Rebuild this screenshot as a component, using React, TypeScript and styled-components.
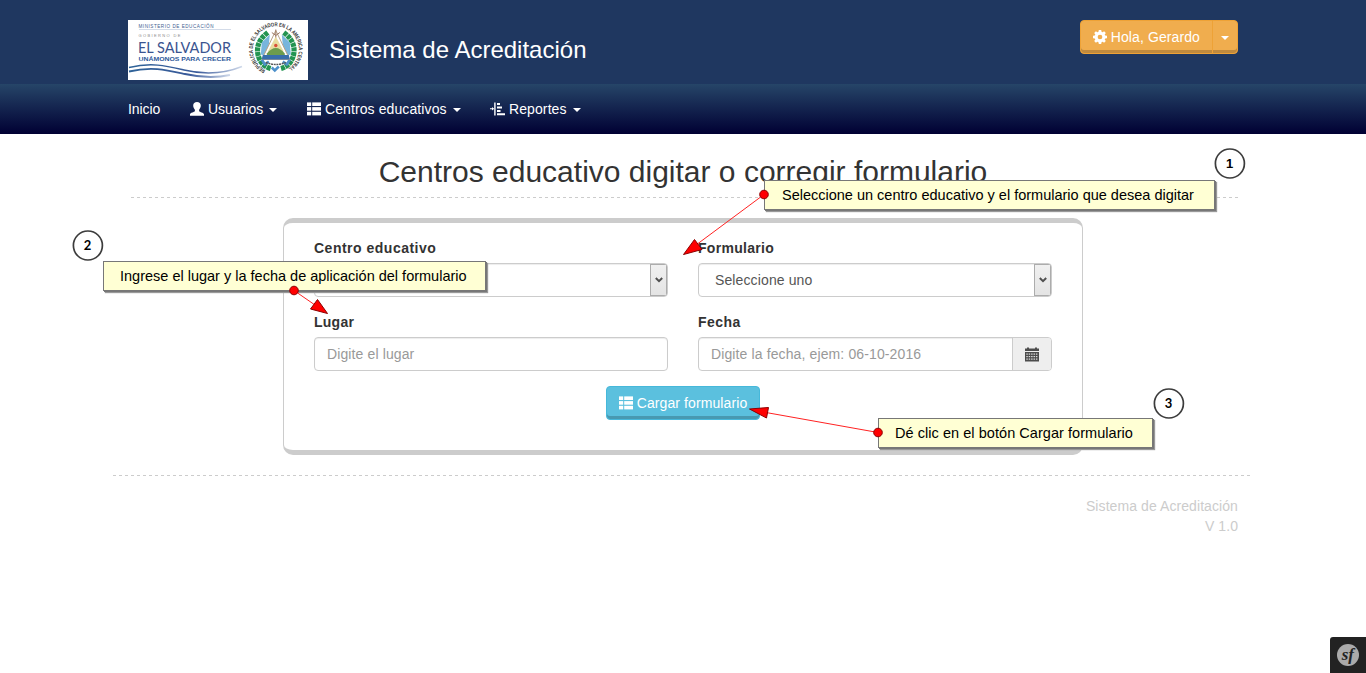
import React from "react";
import styled, { createGlobalStyle, css } from "styled-components";

const GlobalStyle = createGlobalStyle`
  *, *::before, *::after { box-sizing: border-box; }
  html, body { margin: 0; padding: 0; }
  body {
    position: relative;
    min-height: 673px;
    overflow: hidden;
    background: #fff;
    color: #333;
    font: 14px/20px "Liberation Sans", Arial, sans-serif;
  }
`;

const Container = styled.div`
  width: 1140px;
  margin: 0 auto;
  padding: 0 15px;
`;

const Banner = styled.header`
  height: 84px;
  padding-top: 20px;
  background: #1f3760;
`;

const BannerRow = styled(Container)`
  display: flex;
  align-items: flex-start;
`;

const SiteName = styled.div`
  margin-left: 21px;
  color: #fff;
  font-size: 24px;
  line-height: 60px;
`;

const dashed = css`
  background-image: repeating-linear-gradient(to right, #ccc 0 3px, transparent 3px 6px);
  background-repeat: no-repeat;
`;

const ButtonGroup = styled.div`
  display: flex;
  margin-left: auto;
`;

const Button = styled.button<{ $tone: "warning" | "info"; $side?: "left" | "right" }>`
  display: flex;
  align-items: center;
  justify-content: center;
  gap: 4px;
  height: 34px;
  padding: 0 ${(p) => (p.$side === "right" ? 8 : 12)}px;
  border: 1px solid ${(p) => (p.$tone === "warning" ? "#eea236" : "#46b8da")};
  border-radius: ${(p) => (p.$side === "left" ? "4px 0 0 4px" : p.$side === "right" ? "0 4px 4px 0" : "4px")};
  margin-left: ${(p) => (p.$side === "right" ? -1 : 0)}px;
  background: ${(p) => (p.$tone === "warning" ? "#f0ad4e" : "#5bc0de")};
  box-shadow: inset 0 -3px 0 rgba(0, 0, 0, 0.2);
  color: #fff;
  font: inherit;
  letter-spacing: 0.1px;
  white-space: nowrap;
`;

const Nav = styled.nav`
  height: 50px;
  background: linear-gradient(#264568, #000033);
`;

const NavList = styled(Container)`
  display: flex;
  gap: 30px;
  padding-top: 15px;
`;

const NavItem = styled.a<{ $width: number; $spacing?: number }>`
  display: flex;
  align-items: center;
  gap: 4px;
  width: ${(p) => p.$width}px;
  height: 20px;
  color: #fff;
  letter-spacing: ${(p) => p.$spacing ?? 0}px;
  white-space: nowrap;
`;

const Caret = styled.span<{ $push?: boolean }>`
  margin-left: ${(p) => (p.$push ? "auto" : 0)};
  margin-top: 2px;
  border-top: 4px solid #fff;
  border-left: 4px solid transparent;
  border-right: 4px solid transparent;
`;

const Title = styled.h2`
  margin: 20px 0;
  padding: 1px 0 10px;
  font-size: 30px;
  font-weight: 400;
  line-height: 33px;
  text-align: center;
  ${dashed}
  background-size: 1107px 1px;
  background-position: 3px 100%;
`;

const Card = styled.form`
  display: grid;
  grid-template-columns: 354px 354px;
  gap: 15px 30px;
  width: 800px;
  height: 237px;
  margin: 0 auto;
  padding: 15px 30px;
  align-content: start;
  border: solid #ccc;
  border-width: 5px 1px;
  border-radius: 10px;
`;

const Field = styled.div`
  display: flex;
  flex-direction: column;
  gap: 5px;
`;

const Label = styled.label<{ $spacing: number }>`
  font-weight: 700;
  letter-spacing: ${(p) => p.$spacing}px;
`;

const Control = styled.div<{ $muted?: boolean; $indent?: number }>`
  display: flex;
  justify-content: space-between;
  align-items: center;
  height: 34px;
  padding-left: ${(p) => p.$indent ?? 12}px;
  border: 1px solid #ccc;
  border-radius: 4px;
  overflow: hidden;
  box-shadow: inset 0 1px 1px rgba(0, 0, 0, 0.075);
  color: ${(p) => (p.$muted ? "#999" : "#555")};
  letter-spacing: 0.12px;
`;

const SelectArrow = styled.span`
  display: flex;
  align-items: center;
  justify-content: center;
  width: 17px;
  height: 32px;
  border: 1px solid #acacac;
  background: linear-gradient(#f0f0f0, #e4e4e4);
`;

const Addon = styled.span`
  display: flex;
  align-items: center;
  justify-content: center;
  width: 39px;
  height: 32px;
  border-left: 1px solid #ccc;
  background: #eee;
`;

const Actions = styled.div`
  grid-column: 1 / -1;
  display: flex;
  justify-content: center;
`;

const Footer = styled(Container)`
  margin-top: 20px;
  padding-top: 21px;
  ${dashed}
  background-size: 1137px 1px;
  color: #ccc;
  letter-spacing: 0.08px;
  text-align: right;
`;

const DebugBadge = styled.div`
  position: absolute;
  right: 0;
  top: 637px;
  width: 36px;
  height: 36px;
  padding: 6px;
  border-radius: 3px 0 0 0;
  background: #222;
`;

const Note = styled.div<{ $x: number; $y: number; $w: number; $pad: number; $spacing?: number }>`
  position: absolute;
  left: ${(p) => p.$x}px;
  top: ${(p) => p.$y}px;
  width: ${(p) => p.$w}px;
  height: 30px;
  padding-left: ${(p) => p.$pad}px;
  border: 1px solid #777;
  background: #ffffd4;
  box-shadow: 1px 1px 0 #777, 2px 2px 1px #999;
  color: #000;
  font-size: 14.5px;
  line-height: 28px;
  letter-spacing: ${(p) => p.$spacing ?? 0}px;
  white-space: nowrap;
`;

const Step = styled.div<{ $x: number; $y: number; $family?: string }>`
  position: absolute;
  left: ${(p) => p.$x}px;
  top: ${(p) => p.$y}px;
  width: 31px;
  height: 31px;
  color: #000;
  font: 700 13px/31px ${(p) => p.$family ?? '"Liberation Sans"'}, sans-serif;
  text-align: center;
`;

const StepRing = styled.svg`
  position: absolute;
  inset: 0;
`;

const StepDigit = styled.span`
  position: relative;
`;

const Arrows = styled.svg`
  position: absolute;
  left: 0;
  top: 0;
  pointer-events: none;
`;

const ListIcon = () => (
  <svg width="14" height="14" viewBox="0 0 14 14" fill="#fff">
    {[0.4, 5.1, 9.8].map((y) => (
      <React.Fragment key={y}>
        <rect x="0" y={y} width="4.2" height="3.6" />
        <rect x="5.2" y={y} width="8.8" height="3.6" />
      </React.Fragment>
    ))}
  </svg>
);

const UserIcon = () => (
  <svg width="14" height="14" viewBox="0 0 14 14" fill="#fff">
    <path d="M7 0C9.3 0 10.8 1.4 10.8 3.6C10.8 5.3 10 6.8 9.1 7.7V9.2C9.7 10 13.8 10.6 14 12.2V13.7H0V12.2C.2 10.6 4.3 10 4.9 9.2V7.7C4 6.8 3.2 5.3 3.2 3.6C3.2 1.4 4.7 0 7 0Z" />
  </svg>
);

const ReportIcon = () => (
  <svg width="14" height="14" viewBox="0 0 14 14" fill="#fff" overflow="visible">
    <path d="M3.2 .4h1.4v13H3.2zM-1 6.2h4v1.1h-4zM1 5l2 1.8-2 1.8zM6 1h3v2H6zM6 4.4h5v2H6zM6 7.9h3.5v2H6zM6 11.3h8v2H6z" />
  </svg>
);

const CogIcon = () => (
  <svg width="14" height="14" viewBox="-7 -7 14 14">
    <circle r="3.9" fill="none" stroke="#fff" strokeWidth="3.1" />
    {[0, 45, 90, 135, 180, 225, 270, 315].map((a) => (
      <path key={a} d="M-1.6-4.8L-1.2-7H1.2L1.6-4.8Z" fill="#fff" transform={`rotate(${a})`} />
    ))}
  </svg>
);

const CalendarIcon = () => (
  <svg width="14" height="15" viewBox="0 0 14 15" fill="#4c4c4c">
    <path d="M0 1.5h2V.5h2v1h6v-1h2v1h2V4H0zM0 5h14v9.5H0z" />
    <g fill="#ddd">
      {[6.5, 9, 11.5].map((y) =>
        [1.3, 3.7, 6.1, 8.5, 10.9].map((x) => <rect key={`${x}-${y}`} x={x} y={y} width="1.5" height="1.2" />)
      )}
    </g>
  </svg>
);

const Chevron = () => (
  <svg width="8" height="6" viewBox="0 0 8 6">
    <path d="M.8 1L4 4.2L7.2 1" fill="none" stroke="#505050" strokeWidth="2" />
  </svg>
);

const Logo = () => (
  <svg width="180" height="60" viewBox="0 0 180 60" fontFamily="Liberation Sans, sans-serif">
    <defs>
      <path id="ring" d="M137.6 50A23 23 0 1 1 158.4 49.7" />
      <linearGradient id="wave">
        <stop offset="0" stopColor="#2f6398" />
        <stop offset="0.6" stopColor="#3a5a9a" />
        <stop offset="1" stopColor="#cfd9ea" />
      </linearGradient>
    </defs>
    <rect width="180" height="60" fill="#fff" />
    <text x="10.5" y="8" fontSize="4.6" fill="#41608f" textLength="75">MINISTERIO DE EDUCACIÓN</text>
    <path d="M11 9.5H103" stroke="#b5c3d8" strokeWidth=".6" />
    <text x="10.5" y="17.4" fontSize="4" fill="#8a8a8a" textLength="42">GOBIERNO DE</text>
    <text x="10" y="32.6" fontFamily="Lato, sans-serif" fontSize="16.2" fill="#3a5490" textLength="93" lengthAdjust="spacingAndGlyphs">EL SALVADOR</text>
    <text x="10.5" y="41" fontSize="5.9" fontWeight="700" fill="#2d599a" textLength="92.5" lengthAdjust="spacingAndGlyphs">UNÁMONOS PARA CRECER</text>
    <g fill="none" stroke="url(#wave)">
      <path d="M1 47.5C24 42 39 46 56 50S93 55 114 46.5" strokeWidth="1.4" />
      <path d="M1 51.5C24 46 39 50 57 54S88 58 102 55" strokeWidth="1.8" />
    </g>
    <g transform="translate(147.8 29.5)">
      <path d="M-8-17Q-20-8-18 4T-5 19M8-17Q20-8 18 4T5 19" fill="none" stroke="#239451" strokeWidth="5.2" strokeDasharray="4 .6" />
      <path d="M-6-15L-14-7L-15 5L-8 7ZM6-15L14-7L15 5L8 7Z" fill="#78b5dc" />
      <path d="M-14 10L-11 15L-7 12M14 10L11 15L7 12M-4 18L-1 21L3 17" fill="none" stroke="#4e91cb" strokeWidth="2.5" />
      <path d="M0-19L14 10H-14Z" fill="#fff" stroke="#b7a187" strokeWidth="1" />
      <path d="M0-13L8 2H-8Z" fill="#e8dca0" />
      <path d="M-9 4Q0-7 9 4V6H-9Z" fill="#6c9c4d" />
      <circle cy="-4" r="1.7" fill="#d84f39" />
      <path d="M-13 5.5H13L14 10H-14Z" fill="#386eab" />
      <path d="M0-20V-12M-4-17L0-14L4-17" stroke="#9a7560" fill="none" />
      <path d="M-10 13Q0 17 10 13" fill="none" stroke="#555" strokeWidth="1.4" strokeDasharray="2 .7" />
    </g>
    <text fontSize="5.6" fontWeight="700" fill="#333">
      <textPath href="#ring" textLength="120" lengthAdjust="spacingAndGlyphs">REPUBLICA DE EL SALVADOR EN LA AMERICA CENTRAL</textPath>
    </text>
  </svg>
);

const StepMarker = ({ x, y, family, children }: { x: number; y: number; family?: string; children: React.ReactNode }) => (
  <Step $x={x} $y={y} $family={family}>
    <StepRing width="32" height="31" viewBox="0 0 32 31">
      <circle cx="15.9" cy="15.5" r="14.5" fill="#fff" stroke="#3c3c3c" strokeWidth="1.7" />
    </StepRing>
    <StepDigit>{children}</StepDigit>
  </Step>
);

const arrowStyle = { fill: "#f00", stroke: "#8c0000", strokeWidth: 1 };

export default function App() {
  return (
    <>
      <GlobalStyle />
      <Banner>
        <BannerRow>
          <Logo />
          <SiteName>Sistema de Acreditación</SiteName>
          <ButtonGroup>
            <Button $tone="warning" $side="left"><CogIcon />Hola, Gerardo</Button>
            <Button $tone="warning" $side="right"><Caret /></Button>
          </ButtonGroup>
        </BannerRow>
      </Banner>
      <Nav>
        <NavList>
          <NavItem $width={32} $spacing={-0.1}>Inicio</NavItem>
          <NavItem $width={87}><UserIcon />Usuarios<Caret $push /></NavItem>
          <NavItem $width={154} $spacing={0.1}><ListIcon />Centros educativos<Caret $push /></NavItem>
          <NavItem $width={90} $spacing={0.1}><ReportIcon />Reportes<Caret $push /></NavItem>
        </NavList>
      </Nav>
      <Container>
        <Title>Centros educativo digitar o corregir formulario</Title>
        <Card>
          <Field>
            <Label $spacing={0.5}>Centro educativo</Label>
            <Control><span /><SelectArrow><Chevron /></SelectArrow></Control>
          </Field>
          <Field>
            <Label $spacing={0.3}>Formulario</Label>
            <Control $indent={16}>Seleccione uno<SelectArrow><Chevron /></SelectArrow></Control>
          </Field>
          <Field>
            <Label $spacing={0.25}>Lugar</Label>
            <Control $muted>Digite el lugar</Control>
          </Field>
          <Field>
            <Label $spacing={0.45}>Fecha</Label>
            <Control $muted>Digite la fecha, ejem: 06-10-2016<Addon><CalendarIcon /></Addon></Control>
          </Field>
          <Actions>
            <Button type="button" $tone="info"><ListIcon />Cargar formulario</Button>
          </Actions>
        </Card>
      </Container>
      <Footer>
        <div>Sistema de Acreditación</div>
        <div>V 1.0</div>
      </Footer>

      <Note $x={764} $y={180} $w={451} $pad={17}>Seleccione un centro educativo y el formulario que desea digitar</Note>
      <Note $x={103} $y={261} $w={383} $pad={16}>Ingrese el lugar y la fecha de aplicación del formulario</Note>
      <Note $x={878} $y={418} $w={275} $pad={16} $spacing={0.05}>Dé clic en el botón Cargar formulario</Note>
      <StepMarker x={1214} y={148}>1</StepMarker>
      <StepMarker x={72} y={230} family="Lato">2</StepMarker>
      <StepMarker x={1153} y={388} family="Lato">3</StepMarker>
      <Arrows width="1366" height="673">
        <path d="M764 194.5L696 245M294 290.5L315 305M878 432.5L766 412.5" stroke="#f22" fill="none" />
        <g {...arrowStyle}>
          <path d="M683.5 254.5L694.5 239.5L702 249.5Z" />
          <path d="M327.5 313.5L317.5 299.5L310.5 309Z" />
          <path d="M749.5 409L768.5 407.5L766.5 418Z" />
          <circle cx="764" cy="194.5" r="4.3" />
          <circle cx="294" cy="290.5" r="4.3" />
          <circle cx="878" cy="432.5" r="4.3" />
        </g>
      </Arrows>
      <DebugBadge>
        <svg width="24" height="24" viewBox="0 0 24 24">
          <circle cx="12" cy="12" r="11" fill="#aaa" />
          <text x="11.8" y="16.5" textAnchor="middle" fontFamily="Liberation Serif, serif" fontStyle="italic" fontWeight="700" fontSize="17" fill="#222">sf</text>
        </svg>
      </DebugBadge>
    </>
  );
}
